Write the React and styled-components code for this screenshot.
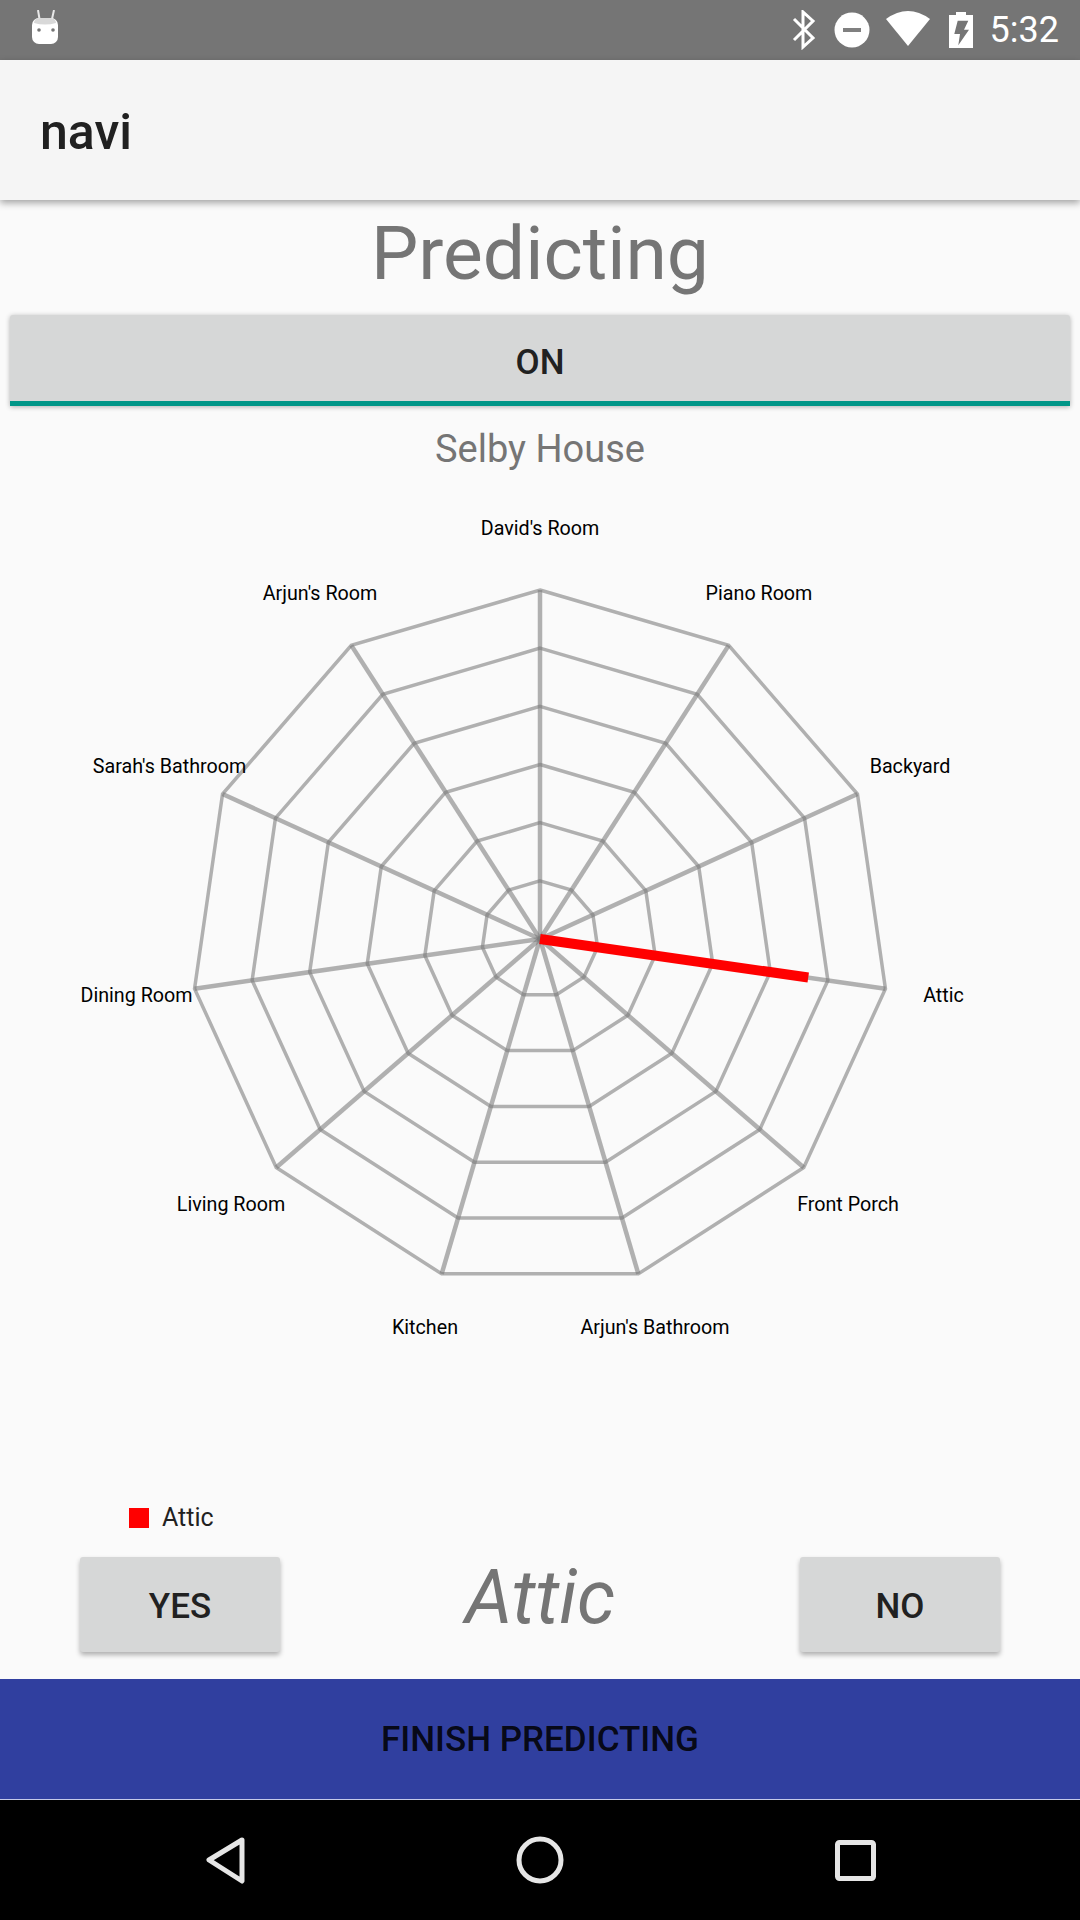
import React from "react";
import styled, { createGlobalStyle } from "styled-components";

const Global = createGlobalStyle`
  html, body { margin: 0; padding: 0; background: #fafafa; }
  * { box-sizing: border-box; }
`;

const CX = 540;
const CY = 939;
const RADIUS = 349;
const RINGS = 6;

const LABELS = [
  { text: "David's Room", x: 540, y: 535 },
  { text: "Piano Room", x: 759, y: 600 },
  { text: "Backyard", x: 910, y: 773 },
  { text: "Attic", x: 943.5, y: 1002 },
  { text: "Front Porch", x: 848, y: 1211 },
  { text: "Arjun's Bathroom", x: 655, y: 1334 },
  { text: "Kitchen", x: 425, y: 1334 },
  { text: "Living Room", x: 231, y: 1211 },
  { text: "Dining Room", x: 136.5, y: 1002 },
  { text: "Sarah's Bathroom", x: 169.5, y: 773 },
  { text: "Arjun's Room", x: 320, y: 600 },
];

const point = (i, r) => {
  const a = (i * 2 * Math.PI) / LABELS.length;
  return [CX + r * Math.sin(a), CY - r * Math.cos(a)];
};

const Screen = styled.div`
  width: 1080px;
  height: 1920px;
  display: flex;
  flex-direction: column;
  overflow: hidden;
  background: #fafafa;
  font-family: Roboto, "Liberation Sans", sans-serif;
`;

const StatusBar = styled.div`
  height: 60px;
  flex: none;
  background: #757575;
  display: flex;
  align-items: center;
  justify-content: space-between;
  padding: 0 21px 0 31px;
`;

const StatusRight = styled.div`
  display: flex;
  align-items: center;
`;

const Clock = styled.span`
  color: #fff;
  font-size: 36px;
  margin-left: 16px;
`;

const AppBar = styled.div`
  height: 140px;
  flex: none;
  background: #f5f5f5;
  display: flex;
  align-items: center;
  padding: 3px 0 0 40px;
  font-size: 50px;
  font-weight: 500;
  color: #212121;
  box-shadow: 0 3px 7px rgba(0, 0, 0, 0.35);
  position: relative;
  z-index: 1;
`;

const Main = styled.div`
  flex: 1;
  display: flex;
  flex-direction: column;
`;

const Title = styled.div`
  height: 115px;
  padding-bottom: 10px;
  display: flex;
  align-items: center;
  justify-content: center;
  font-size: 75px;
  color: #757575;
`;

const Toggle = styled.div`
  height: 91px;
  margin: 0 10px;
  padding-top: 9px;
  background: #d6d7d7;
  border-bottom: 5px solid #009688;
  border-radius: 3px 3px 0 0;
  display: flex;
  align-items: center;
  justify-content: center;
  font-size: 35px;
  font-weight: 500;
  color: #212121;
  box-shadow: 0 1px 5px rgba(0, 0, 0, 0.3);
`;

const House = styled.div`
  height: 85px;
  display: flex;
  align-items: center;
  justify-content: center;
  font-size: 38px;
  color: #757575;
`;

const ChartSvg = styled.svg`
  display: block;
  width: 1080px;
  height: 1001px;
  flex: none;
`;

const ChartLabel = styled.text`
  font-family: Roboto, "Liberation Sans", sans-serif;
  font-size: 19.7px;
  fill: #000;
  text-anchor: middle;
`;

const Legend = styled.div`
  height: 51px;
  display: flex;
  align-items: center;
  padding-left: 129px;
  font-size: 25px;
  color: #212121;
`;

const Swatch = styled.span`
  width: 20px;
  height: 20px;
  background: ${(p) => p.color};
  margin-right: 13px;
`;

const AnswerRow = styled.div`
  display: flex;
  align-items: flex-start;
  justify-content: space-between;
  margin-top: 14px;
  padding: 0 80px;
`;

const AnswerButton = styled.div`
  width: 200px;
  height: 95px;
  padding-top: 4px;
  background: #d6d7d7;
  border-radius: 3px;
  display: flex;
  align-items: center;
  justify-content: center;
  font-size: 35px;
  font-weight: 500;
  color: #212121;
  box-shadow: 0 3px 5px rgba(0, 0, 0, 0.3);
`;

const Guess = styled.div`
  font-size: 75px;
  font-style: italic;
  color: #757575;
  line-height: 80px;
`;

const FinishBar = styled.div`
  height: 121px;
  flex: none;
  background: #303f9f;
  display: flex;
  align-items: center;
  justify-content: center;
  font-size: 35px;
  font-weight: 500;
  color: rgba(0, 0, 0, 0.87);
  border-bottom: 1px solid #c5cae9;
`;

const NavBar = styled.div`
  height: 120px;
  flex: none;
  background: #000;
  display: flex;
  align-items: center;
`;

const NavSvg = styled.svg`
  display: block;
`;

const AndroidIcon = () => (
  <svg width="30" height="40" viewBox="0 0 30 40">
    <path d="M7 0 L8.5 9 M23 0 L21 9" stroke="#e8e8e8" strokeWidth="2" />
    <rect x="1" y="8" width="26" height="26" rx="7" fill="#fff" />
    <path d="M3 13 Q3 8 10 8 H18 Q25 8 25 13 Q14 16 3 13Z" fill="#d8d8d8" />
    <circle cx="8" cy="20" r="1.8" fill="#757575" />
    <circle cx="22" cy="20" r="1.8" fill="#757575" />
  </svg>
);

const StatusIcons = () => (
  <svg width="184" height="40" viewBox="0 0 184 40">
    <path
      d="M4 9 L23 28 L13 37 V2 L23 11 L4 30"
      fill="none"
      stroke="#fff"
      strokeWidth="3"
    />
    <circle cx="62" cy="20" r="17.5" fill="#fff" />
    <rect x="53" y="18" width="18" height="4" fill="#808080" />
    <path d="M96 9 Q118 -7 140 9 L118 36 Z" fill="#fff" />
    <path d="M166 2 H176 V5 H183 V38 H159 V5 H166 Z" fill="#fff" />
    <path
      d="M167.7 10.7 H178.3 L174 19.7 H179 L168.3 35.3 L170 24 H164.3 Z"
      fill="#757575"
    />
  </svg>
);

const Radar = () => {
  const rings = Array.from({ length: RINGS }, (_, k) => {
    const r = (RADIUS * (k + 1)) / RINGS;
    return LABELS.map((_, i) => point(i, r).join(",")).join(" ");
  });
  const [ex, ey] = point(3, 271);
  return (
    <ChartSvg viewBox="0 491 1080 1001">
      {LABELS.map((l, i) => {
        const [x, y] = point(i, RADIUS);
        return (
          <line
            key={l.text}
            x1={CX}
            y1={CY}
            x2={x}
            y2={y}
            stroke="rgba(122,122,122,0.58)"
            strokeWidth="4.5"
          />
        );
      })}
      {rings.map((pts) => (
        <polygon
          key={pts}
          points={pts}
          fill="none"
          stroke="rgba(122,122,122,0.58)"
          strokeWidth="3.5"
        />
      ))}
      <line x1={CX} y1={CY} x2={ex} y2={ey} stroke="#ff0000" strokeWidth="10" />
      {LABELS.map((l) => (
        <ChartLabel key={l.text} x={l.x} y={l.y}>
          {l.text}
        </ChartLabel>
      ))}
    </ChartSvg>
  );
};

export default function App() {
  return (
    <Screen>
      <Global />
      <StatusBar>
        <AndroidIcon />
        <StatusRight>
          <StatusIcons />
          <Clock>5:32</Clock>
        </StatusRight>
      </StatusBar>
      <AppBar>navi</AppBar>
      <Main>
        <Title>Predicting</Title>
        <Toggle>ON</Toggle>
        <House>Selby House</House>
        <Radar />
        <Legend>
          <Swatch color="#ff0000" />
          Attic
        </Legend>
        <AnswerRow>
          <AnswerButton>YES</AnswerButton>
          <Guess>Attic</Guess>
          <AnswerButton>NO</AnswerButton>
        </AnswerRow>
      </Main>
      <FinishBar>FINISH PREDICTING</FinishBar>
      <NavBar>
        <NavSvg width="1080" height="120" viewBox="0 0 1080 120">
          <path
            d="M242 40 L209 60 L242 81 Z"
            fill="none"
            stroke="#e6e6e6"
            strokeWidth="5"
            strokeLinejoin="round"
          />
          <circle cx="540" cy="60" r="21" fill="none" stroke="#e6e6e6" strokeWidth="5" />
          <rect x="837.5" y="42.5" width="36" height="36" rx="2" fill="none" stroke="#e6e6e6" strokeWidth="5" />
        </NavSvg>
      </NavBar>
    </Screen>
  );
}
